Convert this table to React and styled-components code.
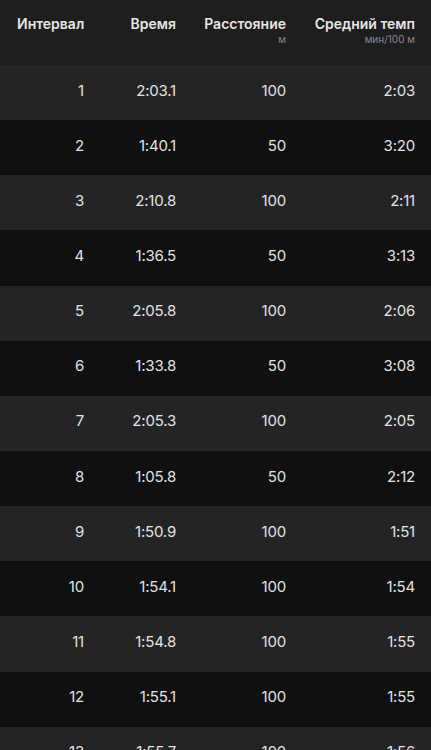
import React from 'react';
import styled, { createGlobalStyle } from 'styled-components';

const GlobalStyle = createGlobalStyle`
  body {
    margin: 0;
    background: #111111;
    font-family: Inter, "Noto Sans", "Liberation Sans", sans-serif;
    -webkit-font-smoothing: antialiased;
  }
`;

const intervals = [
  ['1', '2:03.1', '100', '2:03'],
  ['2', '1:40.1', '50', '3:20'],
  ['3', '2:10.8', '100', '2:11'],
  ['4', '1:36.5', '50', '3:13'],
  ['5', '2:05.8', '100', '2:06'],
  ['6', '1:33.8', '50', '3:08'],
  ['7', '2:05.3', '100', '2:05'],
  ['8', '1:05.8', '50', '2:12'],
  ['9', '1:50.9', '100', '1:51'],
  ['10', '1:54.1', '100', '1:54'],
  ['11', '1:54.8', '100', '1:55'],
  ['12', '1:55.1', '100', '1:55'],
  ['13', '1:55.7', '100', '1:56'],
];

const Screen = styled.div`
  width: 431px;
  height: 750px;
  overflow: hidden;
  background: #111111;
`;

const Grid = styled.div`
  display: grid;
  grid-template-columns: 84px 92px 110px 129px;
  padding-right: 16px;
  align-items: center;
  box-sizing: border-box;
`;

const Header = styled(Grid)`
  height: 65px;
  background: #1e1e1e;
  align-items: start;
  padding-top: 15px;
`;

const HeadCell = styled.div`
  display: flex;
  flex-direction: column;
  align-items: ${p => (p.$left ? 'flex-start' : 'flex-end')};
  padding-left: ${p => (p.$left ? '17px' : '0')};
`;

const Title = styled.span`
  font-size: 14px;
  font-weight: 600;
  color: #e6e6e6;
  line-height: 17px;
  white-space: nowrap;
`;

const Unit = styled.span`
  font-size: 10px;
  color: #8a8a8a;
  line-height: 12px;
  margin-top: 1px;
  white-space: nowrap;
`;

const Row = styled(Grid)`
  height: 55.15px;
  padding-bottom: 5px;
  background: ${p => (p.$odd ? '#242424' : '#101010')};
`;

const Cell = styled.div`
  text-align: right;
  font-size: 15px;
  color: #e2e2e2;
  letter-spacing: -0.2px;
`;

export default function App() {
  return (
    <Screen>
      <GlobalStyle />
      <Header>
        <HeadCell $left>
          <Title>Интервал</Title>
        </HeadCell>
        <HeadCell>
          <Title>Время</Title>
        </HeadCell>
        <HeadCell>
          <Title>Расстояние</Title>
          <Unit>м</Unit>
        </HeadCell>
        <HeadCell>
          <Title>Средний темп</Title>
          <Unit>мин/100 м</Unit>
        </HeadCell>
      </Header>
      {intervals.map((r, i) => (
        <Row key={r[0]} $odd={i % 2 === 0}>
          {r.map((v, j) => (
            <Cell key={j}>{v}</Cell>
          ))}
        </Row>
      ))}
    </Screen>
  );
}
